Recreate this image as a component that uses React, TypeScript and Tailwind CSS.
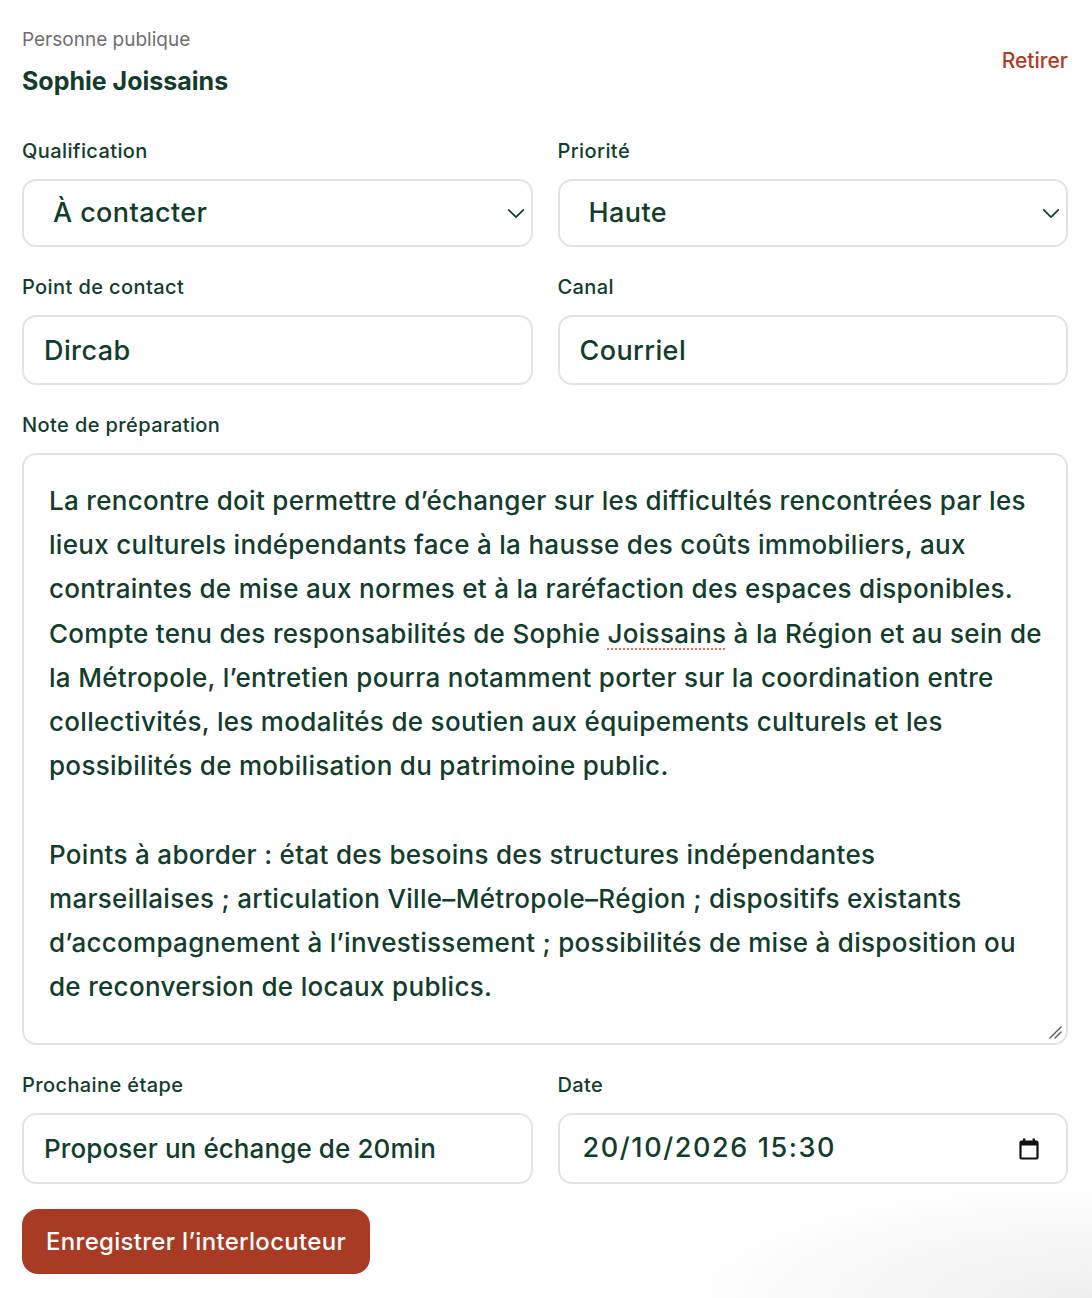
import { useState } from 'react';

const font = { fontFamily: 'Inter, "Noto Sans", sans-serif' };

const noteLines: (string | null)[] = [
    'La rencontre doit permettre d’échanger sur les difficultés rencontrées par les',
    'lieux culturels indépendants face à la hausse des coûts immobiliers, aux',
    'contraintes de mise aux normes et à la raréfaction des espaces disponibles.',
    'JOISSAINS_LINE',
    'la Métropole, l’entretien pourra notamment porter sur la coordination entre',
    'collectivités, les modalités de soutien aux équipements culturels et les',
    'possibilités de mobilisation du patrimoine public.',
    null,
    'Points à aborder : état des besoins des structures indépendantes',
    'marseillaises ; articulation Ville–Métropole–Région ; dispositifs existants',
    'd’accompagnement à l’investissement ; possibilités de mise à disposition ou',
    'de reconversion de locaux publics.',
];

function Chevron() {
    return (
        <svg className="pointer-events-none absolute right-[6px] top-1/2 -translate-y-1/2 w-[22px] h-[22px]" viewBox="0 0 24 24" fill="none" stroke="#123c2b" strokeWidth="1.8" strokeLinecap="round" strokeLinejoin="round">
            <path d="M4 8.5l8 8 8-8" />
        </svg>
    );
}

function CalendarIcon() {
    return (
        <svg className="w-[20px] h-[22px]" viewBox="0 0 20 22" fill="none">
            <rect x="1.5" y="3.5" width="17" height="17" rx="1" stroke="#111" strokeWidth="2.2" />
            <rect x="1.5" y="3.5" width="17" height="4" fill="#111" />
            <rect x="4" y="0.5" width="2.4" height="4" fill="#111" />
            <rect x="13.6" y="0.5" width="2.4" height="4" fill="#111" />
        </svg>
    );
}

function Label({ children }: { children: React.ReactNode }) {
    return <label className="block h-[20px] leading-[20px] text-[20px] font-medium tracking-[0.4px] text-[#123c2b] mb-[18px]">{children}</label>;
}

export default function App() {
    const [form, setForm] = useState({
        qualification: 'À contacter',
        priorite: 'Haute',
        contact: 'Dircab',
        canal: 'Courriel',
        etape: 'Proposer un échange de 20min',
    });

    const fieldBox = 'w-full border-2 border-[#e0e5e3] rounded-[14px] bg-white text-[#123c2b] outline-none';
    const fieldText = 'text-[27px] font-medium tracking-[0.4px]';

    return (
        <div
            style={font}
            className="min-h-[1298px] bg-[radial-gradient(ellipse_420px_120px_at_100%_100%,#eeeeee_0%,#ffffff_100%)] pl-[22px] pr-[24px] pt-[28px] pb-[24px]"
        >
            {/* En-tête */}
            <div className="flex justify-between items-start">
                <div>
                    <div className="text-[19px] leading-[24px] text-[#6f6f6f]">Personne publique</div>
                    <div className="mt-[12px] text-[25px] leading-[34px] font-bold text-[#123c2b]">Sophie Joissains</div>
                </div>
                <button className="mt-[20px] text-[21px] leading-[26px] font-medium text-[#b03b24]">Retirer</button>
            </div>

            <div className="mt-[43px] flex flex-col gap-[30px]">
                <div className="grid grid-cols-2 gap-x-[25px]">
                    <div>
                        <Label>Qualification</Label>
                        <div className="relative">
                            <select
                                value={form.qualification}
                                onChange={(e) => setForm({ ...form, qualification: e.target.value })}
                                className={`${fieldBox} ${fieldText} appearance-none h-[68px] pl-[29px] pr-10`}
                            >
                                <option>À contacter</option>
                                <option>Contacté</option>
                            </select>
                            <Chevron />
                        </div>
                    </div>
                    <div>
                        <Label>Priorité</Label>
                        <div className="relative">
                            <select
                                value={form.priorite}
                                onChange={(e) => setForm({ ...form, priorite: e.target.value })}
                                className={`${fieldBox} ${fieldText} appearance-none h-[68px] pl-[29px] pr-10`}
                            >
                                <option>Haute</option>
                                <option>Moyenne</option>
                                <option>Basse</option>
                            </select>
                            <Chevron />
                        </div>
                    </div>
                </div>

                <div className="grid grid-cols-2 gap-x-[25px]">
                    <div>
                        <Label>Point de contact</Label>
                        <input
                            className={`${fieldBox} ${fieldText} h-[70px] px-[20px]`}
                            value={form.contact}
                            onChange={(e) => setForm({ ...form, contact: e.target.value })}
                        />
                    </div>
                    <div>
                        <Label>Canal</Label>
                        <input
                            className={`${fieldBox} ${fieldText} h-[70px] px-[20px]`}
                            value={form.canal}
                            onChange={(e) => setForm({ ...form, canal: e.target.value })}
                        />
                    </div>
                </div>

                <div>
                    <Label>Note de préparation</Label>
                    <div className={`${fieldBox} relative h-[592px] px-[25px] pt-[24px] text-[26px] font-medium tracking-[0.3px] leading-[44.2px]`}>
                        {noteLines.map((line, i) =>
                            line === null ? (
                                <div key={i} className="h-[44.2px]" />
                            ) : line === 'JOISSAINS_LINE' ? (
                                <div key={i} className="whitespace-nowrap">
                                    Compte tenu des responsabilités de Sophie{' '}
                                    <span className="underline decoration-dotted decoration-[#f26b5b] decoration-2 underline-offset-[6px]">Joissains</span>{' '}
                                    à la Région et au sein de
                                </div>
                            ) : (
                                <div key={i} className="whitespace-nowrap">{line}</div>
                            )
                        )}
                        <svg className="absolute right-[4px] bottom-[4px] w-[14px] h-[14px]" viewBox="0 0 14 14" stroke="#555" strokeWidth="1.4" strokeLinecap="round">
                            <path d="M2 13L13 2" />
                            <path d="M7 13L13 7" />
                        </svg>
                    </div>
                </div>

                <div className="grid grid-cols-2 gap-x-[25px]">
                    <div>
                        <Label>Prochaine étape</Label>
                        <input
                            className={`${fieldBox} text-[26px] font-medium tracking-[0.1px] h-[71px] px-[20px]`}
                            value={form.etape}
                            onChange={(e) => setForm({ ...form, etape: e.target.value })}
                        />
                    </div>
                    <div>
                        <Label>Date</Label>
                        <div className={`${fieldBox} h-[71px] pl-[23px] pr-[27px] flex items-center justify-between`}>
                            <span className="text-[27px] font-medium tracking-[1.6px]">20/10/2026 15:30</span>
                            <CalendarIcon />
                        </div>
                    </div>
                </div>
            </div>

            <button className="mt-[25px] h-[65px] px-[24px] rounded-[16px] bg-[#a93b24] text-white text-[24px] font-medium tracking-[0.3px]">
                Enregistrer l’interlocuteur
            </button>
        </div>
    );
}
